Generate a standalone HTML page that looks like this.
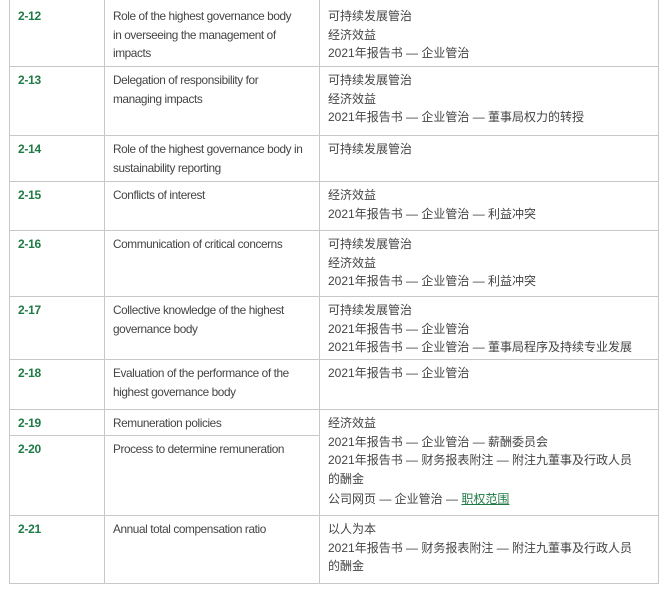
<!DOCTYPE html>
<html><head><meta charset="utf-8"><style>
body{margin:0;background:#fff;width:671px;height:593px;position:relative;overflow:hidden;font-family:"Liberation Sans","Noto Sans CJK SC",sans-serif;font-size:12px;color:#444}
.v{position:absolute;top:0;width:1px;background:#c8c8c8}
.h{position:absolute;height:1px;background:#c8c8c8}
.t{position:absolute;line-height:18.5px;white-space:nowrap}
.c{color:#1f7a45;font-weight:bold;left:18px;letter-spacing:-0.3px}
.d{left:113px;letter-spacing:-0.4px;font-size:11.8px}
.r{left:328px}
a{color:#1f7a45;text-decoration:underline}
</style></head><body>
<div class="v" style="left:9px;height:584px"></div>
<div class="v" style="left:104px;height:584px"></div>
<div class="v" style="left:319px;height:584px"></div>
<div class="v" style="left:658px;height:584px"></div>
<div class="h" style="left:9px;width:650px;top:66px"></div>
<div class="h" style="left:9px;width:650px;top:135px"></div>
<div class="h" style="left:9px;width:650px;top:181px"></div>
<div class="h" style="left:9px;width:650px;top:230px"></div>
<div class="h" style="left:9px;width:650px;top:296px"></div>
<div class="h" style="left:9px;width:650px;top:359px"></div>
<div class="h" style="left:9px;width:650px;top:409px"></div>
<div class="h" style="left:9px;width:311px;top:435px"></div>
<div class="h" style="left:9px;width:650px;top:515px"></div>
<div class="h" style="left:9px;width:650px;top:583px"></div>

<div class="t c" style="top:7px">2-12</div>
<div class="t d" style="top:7px">Role of the highest governance body<br>in overseeing the management of<br>impacts</div>
<div class="t r" style="top:7px">可持续发展管治<br>经济效益<br>2021年报告书 — 企业管治</div>

<div class="t c" style="top:71px">2-13</div>
<div class="t d" style="top:71px">Delegation of responsibility for<br>managing impacts</div>
<div class="t r" style="top:71px">可持续发展管治<br>经济效益<br>2021年报告书 — 企业管治 — 董事局权力的转授</div>

<div class="t c" style="top:140px">2-14</div>
<div class="t d" style="top:140px">Role of the highest governance body in<br>sustainability reporting</div>
<div class="t r" style="top:140px">可持续发展管治</div>

<div class="t c" style="top:186px">2-15</div>
<div class="t d" style="top:186px">Conflicts of interest</div>
<div class="t r" style="top:186px">经济效益<br>2021年报告书 — 企业管治 — 利益冲突</div>

<div class="t c" style="top:235px">2-16</div>
<div class="t d" style="top:235px">Communication of critical concerns</div>
<div class="t r" style="top:235px">可持续发展管治<br>经济效益<br>2021年报告书 — 企业管治 — 利益冲突</div>

<div class="t c" style="top:301px">2-17</div>
<div class="t d" style="top:301px">Collective knowledge of the highest<br>governance body</div>
<div class="t r" style="top:301px">可持续发展管治<br>2021年报告书 — 企业管治<br>2021年报告书 — 企业管治 — 董事局程序及持续专业发展</div>

<div class="t c" style="top:364px">2-18</div>
<div class="t d" style="top:364px">Evaluation of the performance of the<br>highest governance body</div>
<div class="t r" style="top:364px">2021年报告书 — 企业管治</div>

<div class="t c" style="top:414px">2-19</div>
<div class="t d" style="top:414px">Remuneration policies</div>
<div class="t c" style="top:440px">2-20</div>
<div class="t d" style="top:440px">Process to determine remuneration</div>
<div class="t r" style="top:414px">经济效益<br>2021年报告书 — 企业管治 — 薪酬委员会<br>2021年报告书 — 财务报表附注 — 附注九董事及行政人员<br>的酬金</div>
<div class="t r" style="top:490px">公司网页 — 企业管治 — <a>职权范围</a></div>

<div class="t c" style="top:520px">2-21</div>
<div class="t d" style="top:520px">Annual total compensation ratio</div>
<div class="t r" style="top:520px">以人为本<br>2021年报告书 — 财务报表附注 — 附注九董事及行政人员<br>的酬金</div>
</body></html>
